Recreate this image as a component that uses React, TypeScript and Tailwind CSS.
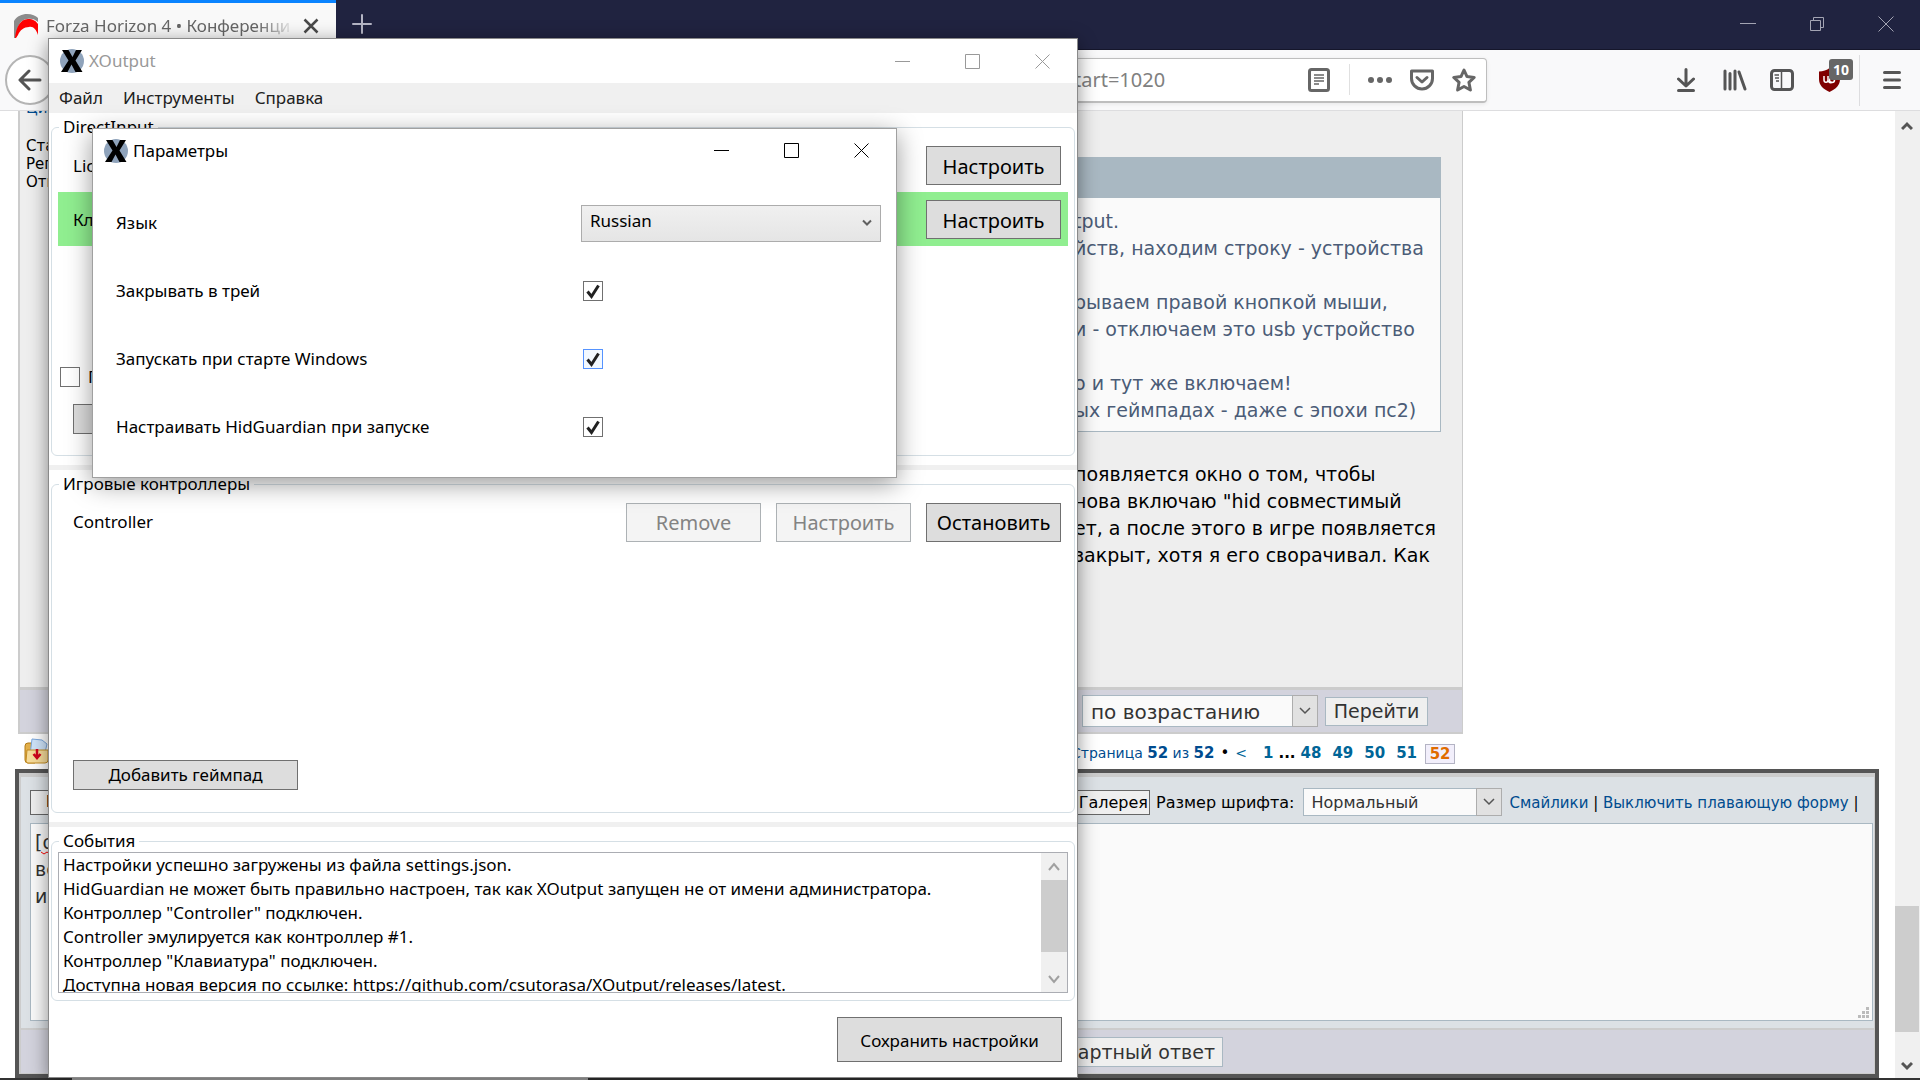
import type { ReactNode } from 'react';

const events = [
  'Настройки успешно загружены из файла settings.json.',
  'HidGuardian не может быть правильно настроен, так как XOutput запущен не от имени администратора.',
  'Контроллер "Controller" подключен.',
  'Controller эмулируется как контроллер #1.',
  'Контроллер "Клавиатура" подключен.',
  'Доступна новая версия по ссылке: https://github.com/csutorasa/XOutput/releases/latest.',
];

const options = [
  { id: 'tray', label: 'Закрывать в трей' },
  { id: 'autostart', label: 'Запускать при старте Windows', focused: true },
  { id: 'hidguardian', label: 'Настраивать HidGuardian при запуске' },
];

const quoteLines = [
  'tput.',
  'йств, находим строку - устройства',
  '',
  'рываем правой кнопкой мыши,',
  'и - отключаем это usb устройство',
  '',
  'о и тут же включаем!',
  'ых геймпадах - даже с эпохи пс2)',
];

const postLines = [
  'появляется окно о том, чтобы',
  'нова включаю "hid совместимый',
  'ет, а после этого в игре появляется',
  'закрыт, хотя я его сворачивал. Как',
];

const segoe = "font-['Noto_Sans','Open_Sans',sans-serif]";
const verdana = "font-['DejaVu_Sans',sans-serif]";

function XLogo() {
  return (
    <svg width="24" height="24" viewBox="0 0 24 24" aria-hidden="true">
      <circle cx="12" cy="12" r="12" fill="#8fa3bb" />
      <path d="M2 1h6.500l4 7L16 1h6l-6.500 10.500L22.500 23h-7l-4-7.500L7.500 23H1l7.500-11.500z" fill="#000" />
    </svg>
  );
}

function CaptionButtons({ color }: { color: string }) {
  return (
    <div className="flex items-center gap-[55px]" style={{ color }}>
      <button aria-label="Свернуть">
        <svg width="15" height="15" viewBox="0 0 15 15" stroke="currentColor" fill="none">
          <path d="M0 7.500h15" />
        </svg>
      </button>
      <button aria-label="Развернуть">
        <svg width="15" height="15" viewBox="0 0 15 15" stroke="currentColor" fill="none">
          <path d="M.5.5h14v14H.5z" />
        </svg>
      </button>
      <button aria-label="Закрыть">
        <svg width="15" height="15" viewBox="0 0 15 15" stroke="currentColor" fill="none">
          <path d="M.5.500l14 14M14.500.500l-14 14" />
        </svg>
      </button>
    </div>
  );
}

function WpfButton({ children, className, disabled }: { children?: ReactNode; className: string; disabled?: boolean }) {
  return (
    <button
      disabled={disabled}
      className={`border shrink-0 ${
        disabled ? 'border-[#adb2b5] bg-[#f4f4f4] text-[#838383]' : 'border-[#707070] bg-[#dddddd] text-black'
      } ${className}`}
    >
      {children}
    </button>
  );
}

function GroupBox({ title, className, children }: { title: string; className: string; children: ReactNode }) {
  return (
    <fieldset className={`mt-[3px] mx-[2px] px-[6px] flex flex-col border border-[#d5dfe5] rounded-md ${className}`}>
      <legend className="ml-px px-1 text-[17px] leading-[22px]">{title}</legend>
      {children}
    </fieldset>
  );
}

function Tick() {
  return (
    <svg className="absolute inset-0 pointer-events-none" width="20" height="20" viewBox="0 0 20 20" fill="none">
      <path d="M4.500 10.500L8.500 15.500L15.500 4.500" stroke="#212121" strokeWidth="3" />
    </svg>
  );
}

function OptionsDialog() {
  return (
    <section
      className={`absolute left-[92px] top-[128px] w-[805px] bg-white border border-[#a0a0a0] shadow-[0_6px_24px_rgba(0,0,0,0.4)] text-[17px] text-black ${segoe}`}
    >
      <header className="flex items-center justify-between h-[45px] pl-[11px] pr-[27px] pb-[2px]">
        <div className="flex items-center gap-[5px]">
          <XLogo />
          <h2 className="leading-6">Параметры</h2>
        </div>
        <CaptionButtons color="#000" />
      </header>
      <div className="pt-[15px] pb-4 pl-[23px]">
        <div className="grid grid-cols-[465px_1fr] items-center h-[68px]">
          <label htmlFor="lang">Язык</label>
          <div className="relative w-[300px]">
            <select
              id="lang"
              className="appearance-none w-full h-[37px] pl-2 pb-1 border border-[#acacac] bg-linear-to-b from-[#f0f0f0] to-[#e5e5e5]"
            >
              <option>Russian</option>
            </select>
            <svg className="absolute right-[9px] top-[14px] pointer-events-none" width="10" height="8" viewBox="0 0 10 8" fill="none">
              <path d="M1 1.500l4 4 4-4" stroke="#606060" strokeWidth="2" />
            </svg>
          </div>
        </div>
        {options.map((o) => (
          <div key={o.id} className="grid grid-cols-[467px_1fr] items-center h-[68px]">
            <label htmlFor={o.id}>{o.label}</label>
            <div className="relative w-5 h-5">
              <input
                id={o.id}
                type="checkbox"
                defaultChecked
                className={`appearance-none block w-5 h-5 border ${o.focused ? 'border-[#5593ff] bg-[#f3f9ff]' : 'border-[#707070] bg-white'}`}
              />
              <Tick />
            </div>
          </div>
        ))}
      </div>
    </section>
  );
}

function XOutputWindow() {
  return (
    <section
      className={`absolute left-[48px] top-[38px] w-[1030px] bg-white border border-[#8a8a8a] shadow-[0_4px_18px_rgba(0,0,0,0.45)] text-[17px] text-black ${segoe}`}
    >
      <header className="flex items-center justify-between h-[44px] pl-[11px] pr-[27px]">
        <div className="flex items-center gap-[5px]">
          <XLogo />
          <h1 className="leading-6 text-[#999999]">XOutput</h1>
        </div>
        <CaptionButtons color="#999" />
      </header>
      <nav className="flex items-center gap-5 h-[30px] pl-[10px] bg-[#f0f0f0] text-[#212121]">
        <button>Файл</button>
        <button>Инструменты</button>
        <button>Справка</button>
      </nav>

      <GroupBox title="DirectInput" className="h-[340px] pb-[21px]">
        <div className="flex items-center justify-between h-[54px] pt-px pl-[15px] pr-[7px]">
          <span>Lic</span>
          <WpfButton className="w-[135px] h-[39px] pt-[2px] text-[20px]">Настроить</WpfButton>
        </div>
        <div className="flex items-center justify-between h-[54px] pt-px pl-[15px] pr-[7px] bg-[#90ee90]">
          <span>Кл</span>
          <WpfButton className="w-[135px] h-[39px] pt-[2px] text-[20px]">Настроить</WpfButton>
        </div>
        <div className="flex-1" />
        <label className="flex items-center gap-2 pl-[2px] h-5">
          <input type="checkbox" className="appearance-none w-5 h-5 border border-[#707070] bg-white" />
          П
        </label>
        <WpfButton className="ml-[15px] mt-[17px] w-[225px] h-[30px]" />
      </GroupBox>

      <div className="mt-[9px] h-[5px] bg-[#f0f0f0]" />

      <GroupBox title="Игровые контроллеры" className="h-[340px] pb-[22px]">
        <div className="flex items-center gap-[15px] h-[54px] pl-[15px] pr-[7px]">
          <span className="flex-1">Controller</span>
          <WpfButton className="w-[135px] h-[39px] pt-[2px] text-[20px]" disabled>Remove</WpfButton>
          <WpfButton className="w-[135px] h-[39px] pt-[2px] text-[20px]" disabled>Настроить</WpfButton>
          <WpfButton className="w-[135px] h-[39px] pt-[2px] text-[20px]">Остановить</WpfButton>
        </div>
        <div className="flex-1" />
        <WpfButton className="ml-[15px] w-[225px] h-[30px]">Добавить геймпад</WpfButton>
      </GroupBox>

      <div className="mt-[9px] h-[5px] bg-[#f0f0f0]" />

      <GroupBox title="События" className="h-[171px] pb-[7px]">
        <div className="flex h-[142px] border border-[#abadb3] overflow-hidden">
          <ul className="flex-1 pl-1 leading-6 whitespace-nowrap">
            {events.map((e) => (
              <li key={e}>{e}</li>
            ))}
          </ul>
          <div className="flex flex-col w-[26px] bg-[#f0f0f0]">
            <div className="flex items-center justify-center h-[27px]">
              <svg width="12" height="12" viewBox="0 0 12 12" fill="none">
                <path d="M1 9l5-6 5 6" stroke="#a0a0a0" strokeWidth="2" />
              </svg>
            </div>
            <div className="h-[72px] bg-[#cdcdcd]" />
            <div className="flex-1" />
            <div className="flex items-center justify-center h-[26px]">
              <svg width="12" height="12" viewBox="0 0 12 12" fill="none">
                <path d="M1 3l5 6 5-6" stroke="#a0a0a0" strokeWidth="2" />
              </svg>
            </div>
          </div>
        </div>
      </GroupBox>

      <footer className="flex justify-end pt-4 pr-[15px] pb-[15px]">
        <WpfButton className="w-[225px] h-[45px] pt-[2px]">Сохранить настройки</WpfButton>
      </footer>
    </section>
  );
}

function TabBar() {
  return (
    <div className={`flex h-[50px] shrink-0 bg-[#202340] border-b border-[#15162b] ${segoe}`}>
      <div className="flex items-center w-[336px] h-[50px] pl-[14px] pr-[17px] pb-[2px] border-t-[3px] border-[#0a84ff] bg-[#f9f9f9]">
        <svg width="24" height="24" viewBox="0 0 24 24" className="shrink-0">
          <path d="M0 24V7C3 2 8 0 13 0c5 0 9 2 11 4v4c-3-3-7-4-11-3C6 6 3 12 2 24z" fill="#8b8b8b" />
          <path d="M1 24C2 14 6 5 14 5c5 0 8 2 10 5v11c-2-6-5-9-9-8-5 0-9 3-11 8l-2 3z" fill="#f00" />
        </svg>
        <span className="flex-1 ml-2 overflow-hidden whitespace-nowrap text-[17px] text-[#666] mask-r-from-85% mask-r-to-100%">
          Forza Horizon 4 • Конференци
        </span>
        <button aria-label="Закрыть вкладку" className="ml-2">
          <svg width="16" height="16" viewBox="0 0 16 16" fill="none">
            <path d="M1.500 1.500l13 13M14.500 1.500l-13 13" stroke="#4a4a4a" strokeWidth="2.500" />
          </svg>
        </button>
      </div>
      <button aria-label="Новая вкладка" className="ml-4 pb-px">
        <svg width="20" height="20" viewBox="0 0 20 20" fill="none">
          <path d="M10 1v18M1 10h18" stroke="#b4b5c4" strokeWidth="2" strokeLinecap="round" />
        </svg>
      </button>
      <div className="flex-1" />
      <div className="flex items-center gap-[53px] pr-[26px] pb-px text-[#a3a4b3]">
        <button aria-label="Свернуть окно">
          <svg width="16" height="16" viewBox="0 0 16 16" stroke="currentColor">
            <path d="M0 7.500h16" />
          </svg>
        </button>
        <button aria-label="Восстановить">
          <svg width="16" height="16" viewBox="0 0 16 16" stroke="currentColor" fill="none">
            <path d="M1.500 4.500h10v10h-10zM4.500 4.500v-3h10v10h-3" />
          </svg>
        </button>
        <button aria-label="Закрыть окно">
          <svg width="16" height="16" viewBox="0 0 16 16" stroke="currentColor">
            <path d="M.5.500l15 15M15.500.500l-15 15" />
          </svg>
        </button>
      </div>
    </div>
  );
}

function Toolbar() {
  return (
    <div className={`relative flex items-center h-[61px] shrink-0 bg-[#f9f9fa] border-b border-[#dddddf] ${segoe}`}>
      <button aria-label="Назад" className="ml-[5px] w-[50px] h-[50px] rounded-full border-2 border-[#b5b5b5] bg-white flex items-center justify-center">
        <svg width="24" height="22" viewBox="0 0 24 22" fill="none" stroke="#555" strokeWidth="3" strokeLinecap="round" strokeLinejoin="round">
          <path d="M22 11H3M11 2L2 11l9 9" />
        </svg>
      </button>
      <div className="flex items-center ml-[400px] w-[1032px] h-[45px] pr-[10px] border border-b-2 border-[#bebebe] rounded bg-white shadow-[0_1px_4px_rgba(0,0,0,0.08)]">
        <input aria-label="Адрес" defaultValue="tart=1020" className="w-[115px] ml-[618px] text-[20px] text-[#808080] outline-none" />
        <div className="flex-1" />
        <svg width="22" height="24" viewBox="0 0 22 24" fill="none" stroke="#666">
          <rect x="1.500" y="1.500" width="19" height="21" rx="2" strokeWidth="3" />
          <path d="M6 7h10M6 10h10M6 13h10M6 16h5" strokeWidth="1.500" />
        </svg>
        <span className="ml-[19px] w-px h-[31px] bg-[#e0e0e0]" />
        <svg className="ml-[18px]" width="24" height="24" viewBox="0 0 24 24" fill="#666">
          <circle cx="3" cy="12" r="3" />
          <circle cx="12" cy="12" r="3" />
          <circle cx="21" cy="12" r="3" />
        </svg>
        <svg className="ml-[18px]" width="24" height="24" viewBox="0 0 24 24" fill="none" stroke="#666" strokeWidth="3" strokeLinecap="round" strokeLinejoin="round">
          <path d="M1.500 3h21v7.500a10.500 10.500 0 0 1-21 0z" />
          <path d="M7 9.500l5 4.500 5-4.500" />
        </svg>
        <svg className="ml-[18px]" width="24" height="24" viewBox="0 0 24 24" fill="none" stroke="#666" strokeWidth="3" strokeLinejoin="round">
          <path d="M12 2l3 6.600 7.200.8-5.300 4.900 1.500 7.700L12 18.500 5.600 22l1.500-7.700-5.300-4.900L9 8.600z" />
        </svg>
      </div>
      <div className="flex-1" />
      <div className="flex items-center h-full text-[#555]">
        <svg width="18" height="24" viewBox="0 0 18 24" fill="none" stroke="currentColor" strokeWidth="3" strokeLinecap="round" strokeLinejoin="round">
          <path d="M9 1.500v16M1.500 11L9 18l7.500-7M1.500 22.500h15" />
        </svg>
        <svg className="ml-7" width="24" height="22" viewBox="0 0 24 22" fill="none" stroke="currentColor" strokeWidth="3" strokeLinecap="round">
          <path d="M2 2v18M7 4.500V20M12 2v18M16 3l6 17" />
        </svg>
        <svg className="ml-[23px]" width="24" height="22" viewBox="0 0 24 22" fill="none" stroke="currentColor">
          <rect x="1.500" y="1.500" width="21" height="19" rx="3" strokeWidth="3" />
          <path d="M11.500 2v18M4.500 6H9M5 9h4M6 12h3" strokeWidth="1.500" />
        </svg>
        <div className="relative ml-[25px]">
          <svg width="21" height="24" viewBox="0 0 21 24" fill="none">
            <path d="M10.500 0C13 2 17 3.500 21 3.500V11c0 6-4 10-10.500 13C4 21 0 17 0 11V3.500C4 3.500 8 2 10.500 0z" fill="#800000" />
            <path d="M5 8v4c0 3 4 3 4 0V8M9 12c0 3 3 3 4 2" stroke="#fff" strokeWidth="1.500" />
            <circle cx="13" cy="12" r="2.500" stroke="#fff" strokeWidth="1.500" />
          </svg>
          <span className="absolute left-[10px] -top-[9px] w-6 h-[21px] rounded-[3px] bg-[#666] text-white text-[14px] leading-[21px] font-bold text-center">
            10
          </span>
        </div>
        <span className="ml-[19px] w-px h-[51px] bg-[#dddddf]" />
        <svg className="ml-[23px] mr-[19px]" width="18" height="20" viewBox="0 0 18 20" stroke="currentColor" strokeWidth="3" strokeLinecap="round">
          <path d="M1.500 2.500h15M1.500 10h15M1.500 17.500h15" />
        </svg>
      </div>
    </div>
  );
}

function ForumSelect({ id, label, value, className }: { id: string; label: string; value: string; className: string }) {
  return (
    <div className="relative flex shrink-0">
      <select
        id={id}
        aria-label={label}
        className={`appearance-none pl-2 pt-px border border-[#a9b8c2] bg-[#fafafa] text-[#333] ${className}`}
      >
        <option>{value}</option>
      </select>
      <span className="absolute right-0 inset-y-0 w-[26px] border border-[#adadad] bg-[#e1e1e1] flex items-center justify-center pointer-events-none">
        <svg width="12" height="8" viewBox="0 0 12 8" fill="none">
          <path d="M1 1l5 5 5-5" stroke="#555" strokeWidth="1.500" />
        </svg>
      </span>
    </div>
  );
}

function Post() {
  return (
    <article className="flex flex-col flex-1 ml-[18px] w-[1445px] border-l-2 border-r border-b-2 border-[#ccc] text-black">
      <div className="flex flex-1 bg-[#eeeeee] overflow-hidden">
        <aside className="w-[200px] pl-[6px] text-[15px] leading-[18px]">
          <a href="#quote" className="block -mt-[12px] mb-5 text-[#004c8f]">Цит</a>
          <p>Ста</p>
          <p>Рег</p>
          <p>Отк</p>
        </aside>
        <div className="flex-1 pt-[46px] pr-[21px] text-[19px] leading-[27px] whitespace-nowrap">
          <div className="h-[41px] bg-[#a9b8c2]" />
          <blockquote className="pl-[853px] pt-[10px] pb-[7px] border border-t-0 border-[#a9b8c2] bg-[#fafafa] text-[#4b5c77]">
            {quoteLines.map((line, i) => (
              <p key={i} className="h-[27px]">{line}</p>
            ))}
          </blockquote>
          <div className="mt-[29px] pl-[854px]">
            {postLines.map((line) => (
              <p key={line}>{line}</p>
            ))}
          </div>
        </div>
      </div>
      <div className="flex items-center gap-[7px] h-[45px] pl-[1062px] border-t-[3px] border-[#ccc] bg-[#d3d3dd]">
        <ForumSelect id="order" label="Порядок" value="по возрастанию" className="w-[236px] h-8 text-[20px]" />
        <button className="w-[103px] h-[29px] border border-[#a9b8c2] bg-[#efefef] text-[#333] text-[19px] leading-[27px]">Перейти</button>
      </div>
    </article>
  );
}

function Pagination() {
  return (
    <nav className="flex items-center h-[35px] pt-1 text-[#006597] whitespace-nowrap">
      <svg className="ml-6 mb-[5px] shrink-0" width="26" height="26" viewBox="0 0 26 26">
        <path d="M1 8q0-3 3-3h5l2 3v17H4q-3 0-3-3z" fill="#e3b04b" stroke="#b27a16" />
        <path d="M8 1l10 1 5 4-3 13-14-2z" fill="#cfe4fa" stroke="#7aa7dc" />
        <path d="M3 12h21v10q0 3-3 3H4q-2 0-2-2z" fill="#f7dc9a" stroke="#c48d24" />
        <path d="M13 11v8M9.500 16l3.500 4 3.500-4" stroke="#d0021b" strokeWidth="2.500" fill="none" />
      </svg>
      <p className="ml-[1021px] text-[14px] text-[#004c8f]">
        Страница <b className="text-[15px]">52</b> из <b className="text-[15px]">52</b>
      </p>
      <span className="ml-[6px] text-black text-[15px]">•</span>
      <a href="#prev" className="ml-[6px] text-[14px]">&lt;</a>
      <div className="flex items-center ml-[16px] text-[15px] font-bold">
        <a href="#1">1</a>
        <span className="mx-[5px] text-black">...</span>
        <a href="#48">48</a>
        <a href="#49" className="ml-[11px]">49</a>
        <a href="#50" className="ml-[11px]">50</a>
        <a href="#51" className="ml-[11px]">51</a>
        <span className="ml-2 w-[30px] h-5 border border-[#b4b4c4] bg-[#f2effb] text-[#e06c00] leading-[18px] text-center">52</span>
      </div>
    </nav>
  );
}

function ReplyForm() {
  return (
    <form className="flex flex-col h-[309px] shrink-0 ml-[15px] mr-4 border-4 border-[#555]">
      <div className="flex flex-col flex-1 border-t-4 border-l-2 border-r border-b border-[#ccc] bg-[#dce1e5]">
        <div className="flex items-center h-[46px] pt-1 pl-[9px] text-[16px] text-black whitespace-nowrap">
          <button type="button" className="w-[60px] h-[25px] mr-[949px] border border-[#666] bg-[#efefef] pl-[15px] text-left text-[15px] font-bold leading-5">B</button>
          <button type="button" className="w-[111px] h-[25px] border border-[#666] bg-[#efefef] pt-px pr-px text-right leading-5">Галерея</button>
          <label htmlFor="size" className="ml-[6px] mr-2 pt-[2px]">Размер шрифта:</label>
          <ForumSelect id="size" label="Размер шрифта" value="Нормальный" className="w-[199px] h-7 text-[16px]" />
          <p className="ml-2 pt-[3px] text-[15px] text-black">
            <a href="#smiles" className="text-[#004c8f]">Смайлики</a> | <a href="#off" className="text-[#004c8f]">Выключить плавающую форму</a> |
          </p>
        </div>
        <div className="relative flex flex-1 pl-[9px] pr-px pb-[7px]">
          <textarea
            aria-label="Ответ"
            defaultValue={'[q\nвс\nи'}
            className="flex-1 resize-none px-1 pt-[5px] border border-[#a9b8c2] bg-[#fafafa] text-[19px] leading-[27px] text-[#333]"
          />
          <svg className="absolute left-5 top-7" width="12" height="4" viewBox="0 0 12 4" fill="none">
            <path d="M0 1l3 2 3-2 3 2 3-2" stroke="#f00" />
          </svg>
          <svg className="absolute right-[5px] bottom-[10px]" width="11" height="11" viewBox="0 0 11 11" fill="#bbb">
            <path d="M8 0h3v3H8zM4 4h3v3H4zM8 4h3v3H8zM0 8h3v3H0zM4 8h3v3H4zM8 8h3v3H8z" />
          </svg>
        </div>
        <div className="flex items-center h-[45px] pl-[982px] border-t-2 border-[#ccc] bg-[#d3d3dd]">
          <button type="button" className="w-[220px] h-[30px] pr-[7px] pt-px border border-[#a9b8c2] bg-[#efefef] text-[#333] text-[19px] leading-[27px] text-right whitespace-nowrap">
            Стандартный ответ
          </button>
        </div>
      </div>
    </form>
  );
}

function PageScrollbar() {
  return (
    <div className="flex flex-col w-[25px] shrink-0 bg-[#f0f0f0]">
      <svg className="mt-[10px] ml-[6px]" width="12" height="10" viewBox="0 0 12 10" fill="none">
        <path d="M1 8l5-5 5 5" stroke="#555" strokeWidth="3" />
      </svg>
      <div className="flex-1" />
      <div className="w-6 h-[126px] bg-[#cdcdcd]" />
      <svg className="mt-[29px] mb-[7px] ml-[6px]" width="12" height="10" viewBox="0 0 12 10" fill="none">
        <path d="M1 2l5 5 5-5" stroke="#555" strokeWidth="3" />
      </svg>
    </div>
  );
}

export default function App() {
  return (
    <div className="relative flex flex-col h-screen overflow-hidden bg-white">
      <TabBar />
      <Toolbar />
      <div className={`flex flex-1 min-h-0 ${verdana}`}>
        <main className="flex flex-col flex-1 min-w-0">
          <Post />
          <Pagination />
          <ReplyForm />
        </main>
        <PageScrollbar />
      </div>
      {/* Taskbar edge */}
      <div className="flex h-[2px] shrink-0 bg-[#333]">
        <div className="ml-[72px] w-[516px] bg-[#b0b0b0]" />
      </div>
      <XOutputWindow />
      <OptionsDialog />
    </div>
  );
}
